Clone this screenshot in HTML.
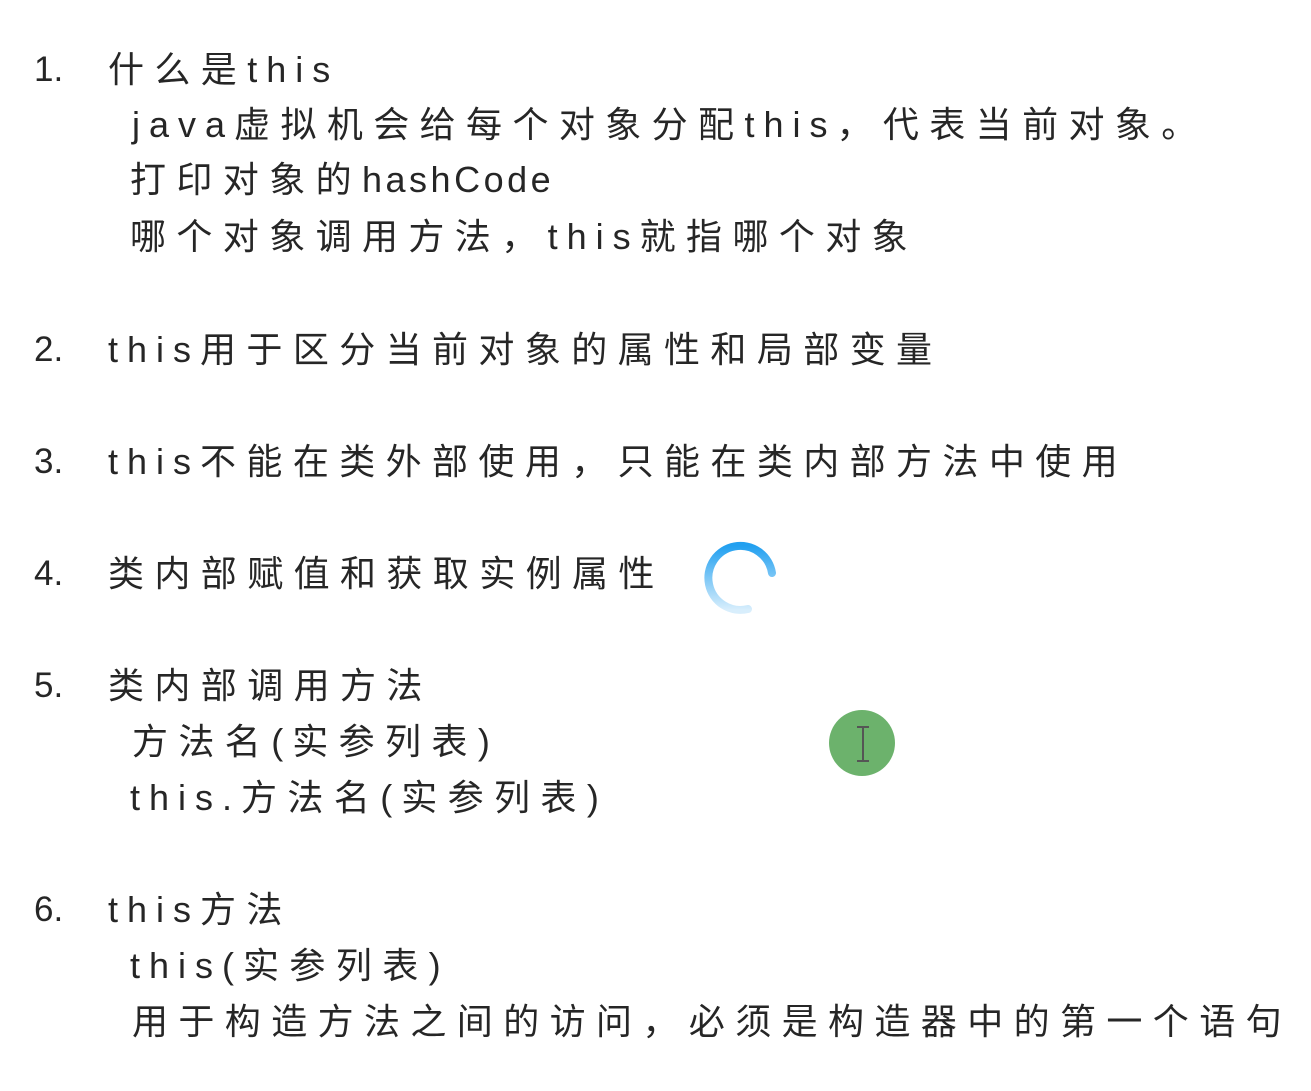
<!DOCTYPE html>
<html><head><meta charset="utf-8"><style>
body{margin:0;width:1311px;height:1091px;background:#fff;overflow:hidden;position:relative;font-family:"Liberation Sans","Noto Sans CJK SC",sans-serif;color:#262626;}
.l{position:absolute;font-size:36px;line-height:40px;letter-spacing:10.4px;white-space:nowrap;}
.n{position:absolute;font-size:35px;line-height:40px;}
.ns{letter-spacing:3.5px}
.e{letter-spacing:9px}
</style></head><body>
<div class="n" style="left:34px;top:50px">1.</div>
<div class="l" style="left:108px;top:50px">什么是<span class="e">this</span></div>
<div class="l" style="left:132px;top:105px"><span class="e">java</span>虚拟机会给每个对象分配<span class="e">this</span>，代表当前对象。</div>
<div class="l" style="left:130px;top:160px">打印对象的<span class="ns">hashCode</span></div>
<div class="l" style="left:130px;top:217px">哪个对象调用方法，<span class="e">this</span>就指哪个对象</div>
<div class="n" style="left:34px;top:330px">2.</div>
<div class="l" style="left:108px;top:330px"><span class="e">this</span>用于区分当前对象的属性和局部变量</div>
<div class="n" style="left:34px;top:442px">3.</div>
<div class="l" style="left:108px;top:442px"><span class="e">this</span>不能在类外部使用，只能在类内部方法中使用</div>
<div class="n" style="left:34px;top:554px">4.</div>
<div class="l" style="left:108px;top:554px">类内部赋值和获取实例属性</div>
<div class="n" style="left:34px;top:666px">5.</div>
<div class="l" style="left:108px;top:666px">类内部调用方法</div>
<div class="l" style="left:132px;top:722px">方法名<span class="e">(</span>实参列表<span class="e">)</span></div>
<div class="l" style="left:130px;top:778px"><span class="e">this.</span>方法名<span class="e">(</span>实参列表<span class="e">)</span></div>
<div class="n" style="left:34px;top:890px">6.</div>
<div class="l" style="left:108px;top:890px"><span class="e">this</span>方法</div>
<div class="l" style="left:130px;top:946px"><span class="e">this(</span>实参列表<span class="e">)</span></div>
<div class="l" style="left:132px;top:1002px">用于构造方法之间的访问，必须是构造器中的第一个语句</div>
<svg style="position:absolute;left:696px;top:533px" width="90" height="90" viewBox="0 0 90 90">
<defs><linearGradient id="g" x1="0" y1="0" x2="0" y2="1"><stop offset="0" stop-color="#22a0f0"/><stop offset="1" stop-color="#d8eefc"/></linearGradient></defs>
<path d="M76 40 A32 32 0 1 0 52 76" fill="none" stroke="url(#g)" stroke-width="8" stroke-linecap="round"/>
</svg>
<div style="position:absolute;left:829px;top:710px;width:66px;height:66px;border-radius:50%;background:#6cb26c"></div>
<svg style="position:absolute;left:852px;top:724px" width="22" height="40" viewBox="0 0 22 40"><path d="M5 3H17M11 3V37M5 37H17" stroke="#555" stroke-width="2" fill="none"/></svg>
</body></html>
